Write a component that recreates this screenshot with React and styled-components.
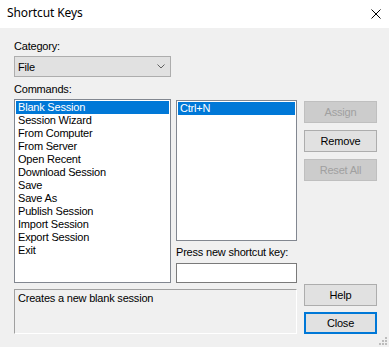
import React from "react";
import styled, { createGlobalStyle } from "styled-components";

const GlobalStyle = createGlobalStyle`
  html, body {
    margin: 0;
    padding: 0;
    background: #f0f0f0;
  }
  * {
    box-sizing: border-box;
  }
`;

const Window = styled.div`
  position: relative;
  width: 389px;
  height: 347px;
  background: #f0f0f0;
  font-family: "Liberation Sans", Arial, sans-serif;
  font-size: 11px;
  letter-spacing: -0.2px;
  color: #000;
  overflow: hidden;
`;

const TitleBar = styled.div`
  height: 28px;
  background: #fff;
  display: flex;
  align-items: flex-start;
  justify-content: space-between;
  padding: 5px 8px 0 7px;
`;

const Title = styled.div`
  font-family: "Noto Sans", "Open Sans", sans-serif;
  font-size: 12px;
  line-height: 16px;
  letter-spacing: -0.1px;
`;

const CloseIcon = styled.svg`
  margin-top: 4px;
  width: 10px;
  height: 10px;
`;

const Body = styled.div`
  display: flex;
  gap: 7px;
  padding: 0 12px 0 14px;
  height: 319px;
`;

const Main = styled.div`
  width: 283px;
  display: flex;
  flex-direction: column;
`;

const Label = styled.div`
  line-height: 13px;
  height: 13px;
  margin-top: ${(p) => p.$top}px;
  white-space: nowrap;
`;

const Combo = styled.div`
  margin-top: 3px;
  width: 157px;
  height: 21px;
  border: 1px solid #adadad;
  background: #e1e1e1;
  display: flex;
  align-items: center;
  justify-content: space-between;
  padding: 0 5px 0 3px;
`;

const Chevron = styled.svg`
  width: 8px;
  height: 5px;
`;

const ListsRow = styled.div`
  margin-top: 3px;
  height: 184px;
  display: flex;
  gap: 5px;
`;

const ListBox = styled.div`
  width: ${(p) => p.$width}px;
  height: ${(p) => p.$height}px;
  margin-top: ${(p) => p.$top || 0}px;
  border: 1px solid #828790;
  background: #fff;
  padding: 1px;
  flex-shrink: 0;
`;

const ListItem = styled.div`
  line-height: 13px;
  height: 13px;
  padding-left: 2px;
  white-space: nowrap;
  background: ${(p) => (p.$selected ? "#0078d7" : "transparent")};
  color: ${(p) => (p.$selected ? "#fff" : "#000")};
`;

const KeysColumn = styled.div`
  width: 121px;
  display: flex;
  flex-direction: column;
`;

const KeyInput = styled.div`
  margin-top: 4px;
  height: 20px;
  border: 1px solid #7a7a7a;
  background: #fff;
`;

const Description = styled.div`
  margin-top: 6px;
  height: 45px;
  border-top: 1px solid #a0a0a0;
  border-left: 1px solid #a0a0a0;
  border-right: 1px solid #fff;
  border-bottom: 1px solid #fff;
  padding: 2px 3px;
  line-height: 13px;
`;

const ButtonColumn = styled.div`
  width: 73px;
  display: flex;
  flex-direction: column;
  padding: 73px 0 13px;
`;

const ButtonGroup = styled.div`
  display: flex;
  flex-direction: column;
  gap: ${(p) => p.$gap}px;
  margin-top: ${(p) => (p.$bottom ? "auto" : "0")};
`;

const Button = styled.div`
  height: 22px;
  display: flex;
  align-items: center;
  justify-content: center;
  border: ${(p) => (p.$default ? "2px solid #0078d7" : p.$disabled ? "1px solid #bfbfbf" : "1px solid #adadad")};
  background: ${(p) => (p.$disabled ? "#cccccc" : "#e1e1e1")};
  color: ${(p) => (p.$disabled ? "#a0a0a0" : "#000")};
  white-space: nowrap;
`;

const Grip = styled.svg`
  position: absolute;
  right: 2px;
  bottom: 2px;
  width: 8px;
  height: 8px;
`;

const commands = [
  "Blank Session",
  "Session Wizard",
  "From Computer",
  "From Server",
  "Open Recent",
  "Download Session",
  "Save",
  "Save As",
  "Publish Session",
  "Import Session",
  "Export Session",
  "Exit",
];

export default function App() {
  const selected = 0;
  return (
    <>
      <GlobalStyle />
      <Window>
        <TitleBar>
          <Title>Shortcut Keys</Title>
          <CloseIcon viewBox="0 0 10 10">
            <path d="M0.5 0.5 L9.5 9.5 M9.5 0.5 L0.5 9.5" stroke="#000" strokeWidth="1" fill="none" />
          </CloseIcon>
        </TitleBar>
        <Body>
          <Main>
            <Label $top={12}>Category:</Label>
            <Combo>
              <span>File</span>
              <Chevron viewBox="0 0 8 5">
                <path d="M0.5 0.5 L4 4 L7.5 0.5" stroke="#606060" strokeWidth="1" fill="none" />
              </Chevron>
            </Combo>
            <Label $top={6}>Commands:</Label>
            <ListsRow>
              <ListBox $width={157} $height={184}>
                {commands.map((c, i) => (
                  <ListItem key={c} $selected={i === selected}>
                    {c}
                  </ListItem>
                ))}
              </ListBox>
              <KeysColumn>
                <ListBox $width={121} $height={141} $top={1}>
                  <ListItem $selected>Ctrl+N</ListItem>
                </ListBox>
                <Label $top={5}>Press new shortcut key:</Label>
                <KeyInput />
              </KeysColumn>
            </ListsRow>
            <Description>Creates a new blank session</Description>
          </Main>
          <ButtonColumn>
            <ButtonGroup $gap={7}>
              <Button $disabled>Assign</Button>
              <Button>Remove</Button>
              <Button $disabled>Reset All</Button>
            </ButtonGroup>
            <ButtonGroup $gap={6} $bottom>
              <Button>Help</Button>
              <Button $default>Close</Button>
            </ButtonGroup>
          </ButtonColumn>
        </Body>
        <Grip viewBox="0 0 8 8">
          {[
            [6, 0],
            [3, 3],
            [6, 3],
            [0, 6],
            [3, 6],
            [6, 6],
          ].map(([x, y]) => (
            <rect key={`${x}-${y}`} x={x} y={y} width="2" height="2" fill="#bcbcbc" />
          ))}
        </Grip>
      </Window>
    </>
  );
}
